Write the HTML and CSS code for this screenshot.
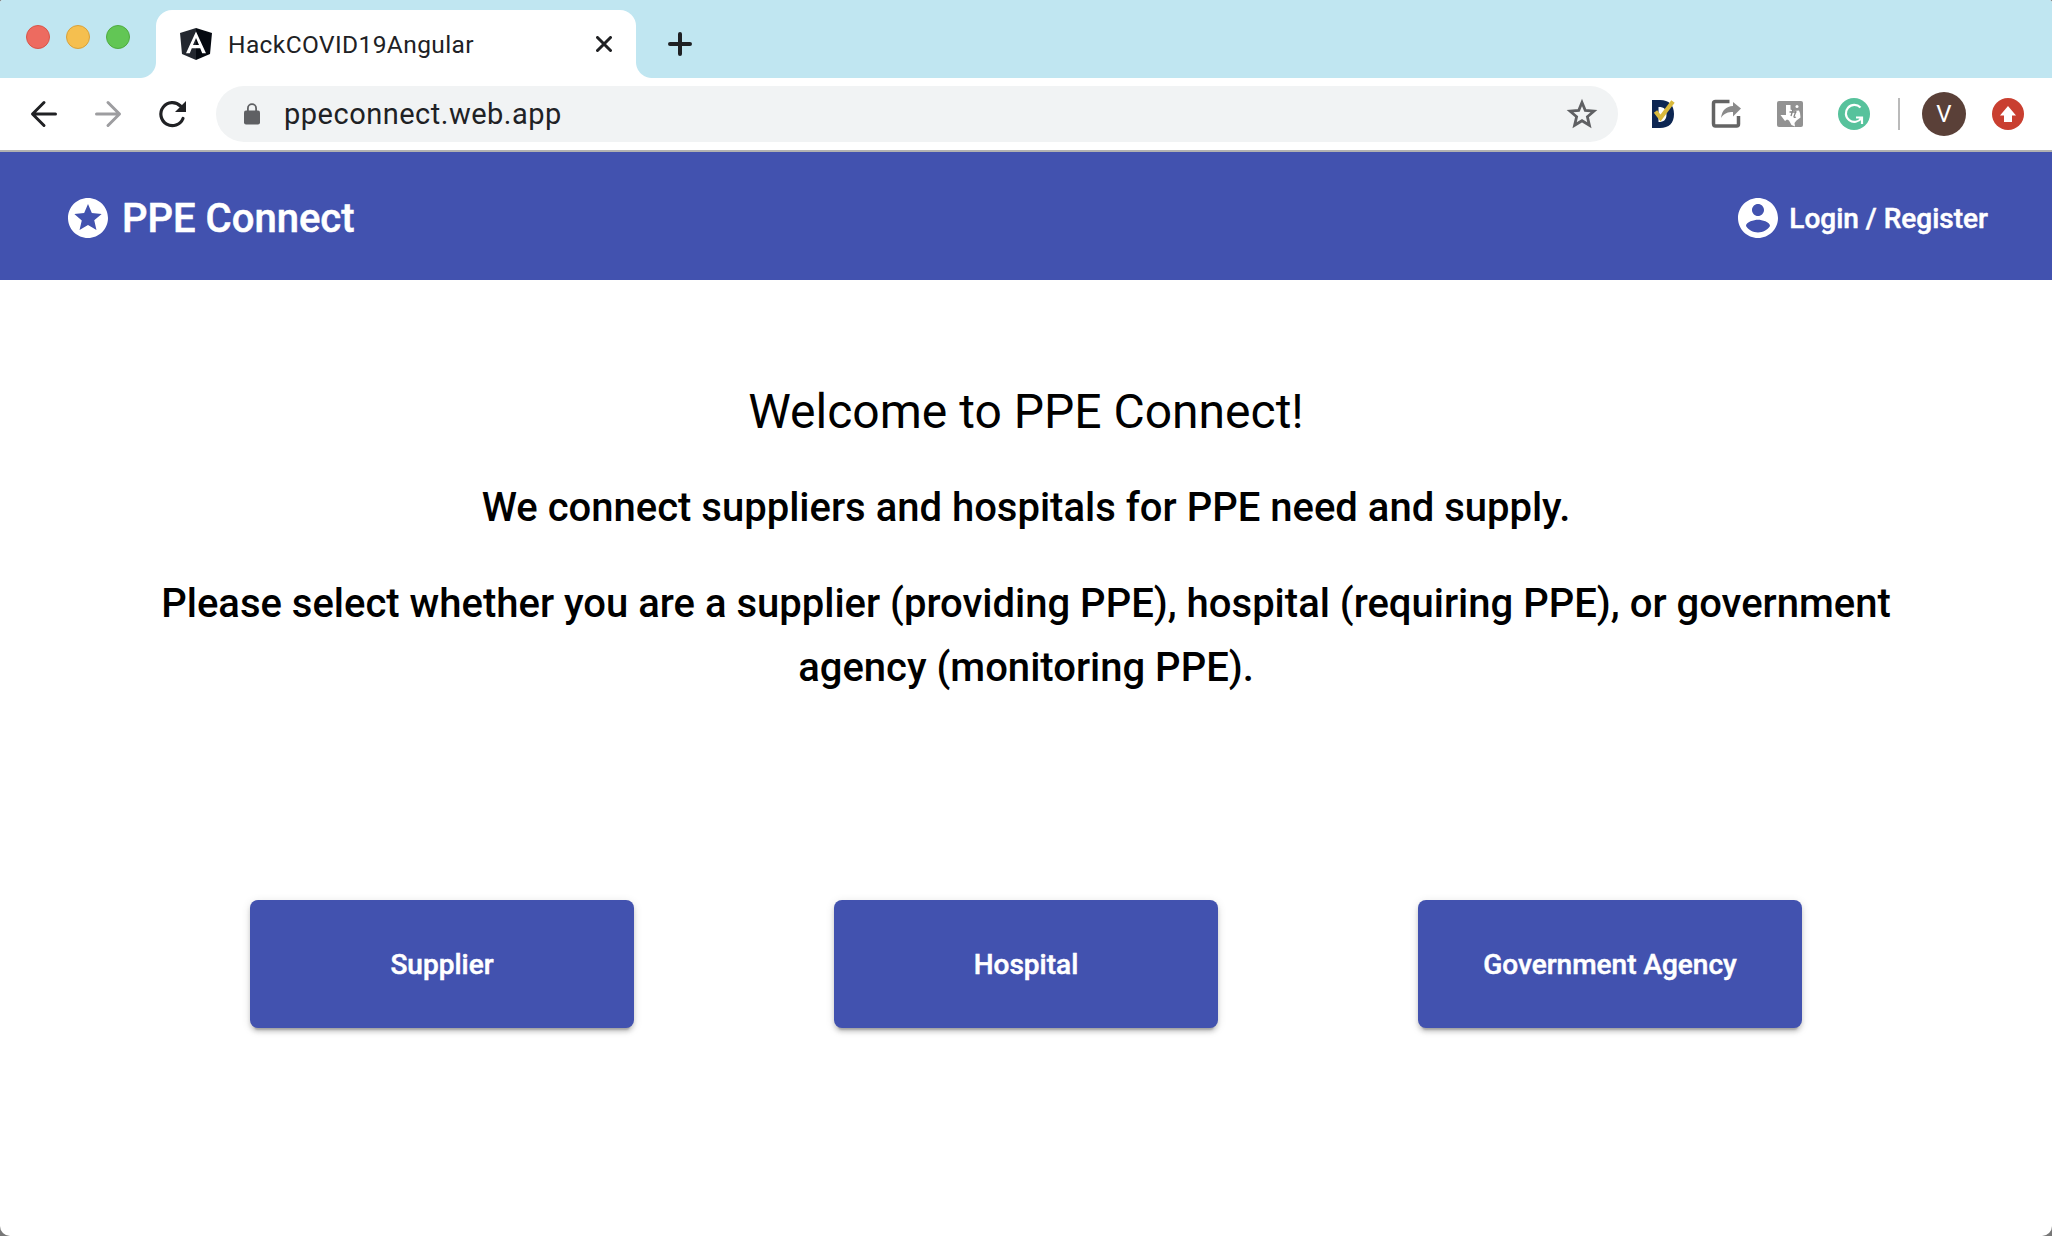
FILE: index.html
```html
<!DOCTYPE html>
<html lang="en">
<head>
  <meta charset="UTF-8">
  <meta name="viewport" content="width=device-width, initial-scale=1.0">
  <title>HackCOVID19Angular</title>
  <link rel="stylesheet" href="styles.css">
</head>
<body>
<div class="window">
  <div class="tabstrip">
    <div class="lights">
      <span class="light red"></span>
      <span class="light yellow"></span>
      <span class="light green"></span>
    </div>
    <div class="tab">
      <svg width="32" height="32" viewBox="0 0 32 32">
        <path fill="#23272f" d="M16 0L0 5l2 21 14 6z"/>
        <path fill="#050910" d="M16 0l16 5-2 21-14 6z"/>
        <path fill="#fff" fill-rule="evenodd" d="M16 3.500L6 25.200h3.800l2-5h8.400l2 5H26zM16 10l3 7h-6z"/>
      </svg>
      <span class="tab-title">HackCOVID19Angular</span>
      <svg class="tab-close" width="16" height="16" viewBox="0 0 16 16">
        <path d="M1.500 1.500l13 13M14.500 1.500l-13 13" stroke="#202124" stroke-width="3" stroke-linecap="round"/>
      </svg>
    </div>
    <svg class="new-tab" width="24" height="24" viewBox="0 0 24 24">
      <path d="M12 2v20M2 12h20" stroke="#202124" stroke-width="4" stroke-linecap="round"/>
    </svg>
  </div>

  <div class="toolbar">
    <div class="nav">
      <svg width="32" height="32" viewBox="0 0 32 32" fill="none" stroke="#202124" stroke-width="3" stroke-linecap="round" stroke-linejoin="round">
        <path d="M27.500 16H5M16 4.500L4.500 16 16 27.500"/>
      </svg>
      <svg width="32" height="32" viewBox="0 0 32 32" fill="none" stroke="#9d9da0" stroke-width="3" stroke-linecap="round" stroke-linejoin="round">
        <path d="M4.500 16H27M16 4.500L27.500 16 16 27.500"/>
      </svg>
      <svg width="32" height="32" viewBox="0 0 32 32">
        <path fill="none" stroke="#202124" stroke-width="3.200" stroke-linecap="round" d="M27 20.500A11.500 11.500 0 1 1 24.500 8"/>
        <path fill="#202124" d="M30 3v11H19z"/>
      </svg>
    </div>
    <div class="omnibox">
      <svg width="16" height="22" viewBox="0 0 16 22">
        <rect y="7.500" width="16" height="14" rx="2" fill="#5f6063"/>
        <path d="M3.900 8V5.200a4.100 4.100 0 0 1 8.200 0V8" fill="none" stroke="#5f6063" stroke-width="1.800"/>
      </svg>
      <span class="url">ppeconnect.web.app</span>
      <svg class="bookmark" width="32" height="32" viewBox="0 0 32 32">
        <path d="M16 4.500l3.300 8 8.600.700-6.500 5.600 2 8.400-7.400-4.500-7.400 4.500 2-8.400-6.500-5.600 8.600-.700z" fill="none" stroke="#5f6063" stroke-width="2.800"/>
      </svg>
    </div>
    <div class="extensions">
      <svg width="32" height="32" viewBox="0 0 32 32">
        <path fill="#0d2652" fill-rule="evenodd" d="M6 2h8c9 0 14 5 14 14s-5 14-14 14H6zM12.500 9v15c5.500 0 8-2.500 8-7.500s-2-7.500-8-7.500z"/>
        <path d="M9.500 13.500l5 6.500L27 3.500" fill="none" stroke="#d9b93c" stroke-width="4.200"/>
      </svg>
      <svg width="32" height="32" viewBox="0 0 32 32">
        <path d="M19.500 3.500H5.500Q3.500 3.500 3.500 5.500v20Q3.500 28 5.500 28h21Q28.500 28 28.500 26v-8" fill="none" stroke="#646464" stroke-width="3.500"/>
        <path fill="#8b8b8b" d="M11 20c1-8 5-11.500 12-12V4l8 6.500-8 8v-4.500c-5 0-9 1-12 6z"/>
      </svg>
      <svg width="32" height="32" viewBox="0 0 32 32">
        <rect x="3" y="3" width="26" height="26" rx="2" fill="#929292"/>
        <path fill="#fff" d="M12 7h4.500v4.500L20 13l5-.500 1 2.500.500 4.500-4 3-2 2.500.500 3.500-3.500-1.500-2.500-4.500-2-1-2 1.500-4.500-6H12z"/>
        <path d="M19 11.500l-2 6.500M15.500 14h7M22 13l-2 5.500q0 1.500 2 .500" fill="none" stroke="#858585" stroke-width="1.300"/>
        <circle cx="23" cy="8.500" r="1.500" fill="#fff"/>
      </svg>
      <svg width="32" height="32" viewBox="0 0 32 32">
        <circle cx="16" cy="16" r="16" fill="#57c29c"/>
        <path d="M22.500 9.500A8.500 8.500 0 1 0 23.500 20M18 19.500h6V26" fill="none" stroke="#fff" stroke-width="2.200"/>
      </svg>
    </div>
    <span class="divider"></span>
    <span class="avatar">V</span>
    <svg class="update" width="32" height="32" viewBox="0 0 32 32">
      <circle cx="16" cy="16" r="16" fill="#c93f30"/>
      <path fill="#fff" d="M16 8l8 9.500h-4V24h-8v-6.500H8z"/>
    </svg>
  </div>

  <header class="header">
    <div class="brand">
      <svg width="48" height="48" viewBox="0 0 24 24" fill="#fff">
        <path d="M11.990 2C6.470 2 2 6.480 2 12s4.470 10 9.990 10C17.520 22 22 17.520 22 12S17.520 2 11.990 2zm4.240 16L12 15.450 7.770 18l1.120-4.810-3.730-3.230 4.920-.420L12 5l1.920 4.530 4.920.420-3.730 3.230L16.230 18z"/>
      </svg>
      <span>PPE Connect</span>
    </div>
    <div class="login">
      <svg width="48" height="48" viewBox="0 0 24 24" fill="#fff">
        <path d="M12 2C6.480 2 2 6.480 2 12s4.480 10 10 10 10-4.480 10-10S17.520 2 12 2zm0 3c1.660 0 3 1.340 3 3s-1.340 3-3 3-3-1.340-3-3 1.340-3 3-3zm0 14.200c-2.500 0-4.710-1.280-6-3.220.030-1.990 4-3.080 6-3.080 1.990 0 5.970 1.090 6 3.080-1.290 1.940-3.500 3.220-6 3.220z"/>
      </svg>
      <span>Login / Register</span>
    </div>
  </header>

  <main class="content">
    <h1>Welcome to PPE Connect!</h1>
    <h2>We connect suppliers and hospitals for PPE need and supply.</h2>
    <h2>Please select whether you are a supplier (providing PPE), hospital (requiring PPE), or government agency (monitoring PPE).</h2>
    <div class="buttons">
      <button>Supplier</button>
      <button>Hospital</button>
      <button>Government Agency</button>
    </div>
  </main>
</div>
</body>
</html>
```
FILE: styles.css
```css
* {
  box-sizing: border-box;
}
body {
  margin: 0;
  background: #777;
  font-family: Roboto, sans-serif;
}
svg {
  display: block;
  flex-shrink: 0;
}
.window {
  height: 1236px;
  background: #fff;
  border-radius: 3px 3px 10px 10px;
  overflow: hidden;
}

/* browser chrome */
.tabstrip {
  display: flex;
  height: 78px;
  background: #c0e6f1;
}
.lights {
  display: flex;
  gap: 16px;
  width: 156px;
  padding: 25px 0 0 26px;
}
.light {
  width: 24px;
  height: 24px;
  border-radius: 50%;
  border: 1px solid;
}
.red {
  background: #ed6b60;
  border-color: #d85549;
}
.yellow {
  background: #f5bf4f;
  border-color: #d8a13b;
}
.green {
  background: #62c655;
  border-color: #4fab40;
}
.tab {
  position: relative;
  display: flex;
  align-items: center;
  width: 480px;
  height: 68px;
  margin-top: 10px;
  padding: 0 24px;
  background: #fff;
  border-radius: 16px 16px 0 0;
}
.tab::before,
.tab::after {
  content: "";
  position: absolute;
  bottom: 0;
  width: 16px;
  height: 16px;
}
.tab::before {
  left: -16px;
  background: radial-gradient(circle at 0 0, transparent 15.500px, #fff 16.500px);
}
.tab::after {
  right: -16px;
  background: radial-gradient(circle at 100% 0, transparent 15.500px, #fff 16.500px);
}
.tab-title {
  margin-left: 16px;
  font-size: 24.500px;
  letter-spacing: 0.400px;
  color: #202124;
}
.tab-close {
  margin-left: auto;
}
.new-tab {
  margin: 32px 0 0 32px;
}
.toolbar {
  display: flex;
  align-items: center;
  height: 74px;
  padding: 0 28px;
  border-bottom: 2px solid #b1b1b1;
}
.nav {
  display: flex;
  gap: 32px;
  width: 188px;
}
.omnibox {
  display: flex;
  align-items: center;
  width: 1402px;
  height: 56px;
  padding: 0 20px 0 28px;
  background: #f1f3f4;
  border-radius: 28px;
}
.url {
  margin-left: 24px;
  font-size: 29px;
  letter-spacing: 0.500px;
  color: #202124;
}
.bookmark {
  margin-left: auto;
}
.extensions {
  display: flex;
  gap: 32px;
  margin-left: 28px;
}
.divider {
  width: 2px;
  height: 32px;
  margin-left: 28px;
  background: #bababa;
}
.avatar {
  width: 44px;
  height: 44px;
  margin: 0 26px 0 22px;
  border-radius: 50%;
  background: #5a4038;
  color: #fff;
  font-size: 24px;
  line-height: 44px;
  text-align: center;
}

/* page */
.header {
  display: flex;
  justify-content: space-between;
  height: 128px;
  padding: 0 64px;
  background: #4252af;
  color: #fff;
  font-weight: 500;
  -webkit-text-stroke: 0.500px #fff;
}
.brand,
.login {
  display: flex;
  align-items: center;
  height: 132px;
}
.brand {
  gap: 10px;
  font-size: 40px;
}
.login {
  gap: 7px;
  font-size: 28px;
}
.content {
  padding: 100px 150px 0;
  text-align: center;
}
h1 {
  margin: 0 0 32px;
  font-size: 48px;
  font-weight: 400;
  line-height: 64px;
}
h2 {
  margin: 0 0 32px;
  font-size: 40px;
  font-weight: 500;
  line-height: 64px;
}
.buttons {
  display: flex;
  justify-content: center;
  gap: 200px;
  margin-top: 200px;
}
button {
  width: 384px;
  height: 128px;
  padding: 0;
  border: 0;
  border-radius: 8px;
  background: #4252af;
  color: #fff;
  font: 500 28px Roboto, sans-serif;
  -webkit-text-stroke: 0.500px #fff;
  box-shadow: 0 6px 2px -4px rgba(0, 0, 0, 0.2), 0 4px 4px rgba(0, 0, 0, 0.14), 0 2px 10px rgba(0, 0, 0, 0.12);
}
```
